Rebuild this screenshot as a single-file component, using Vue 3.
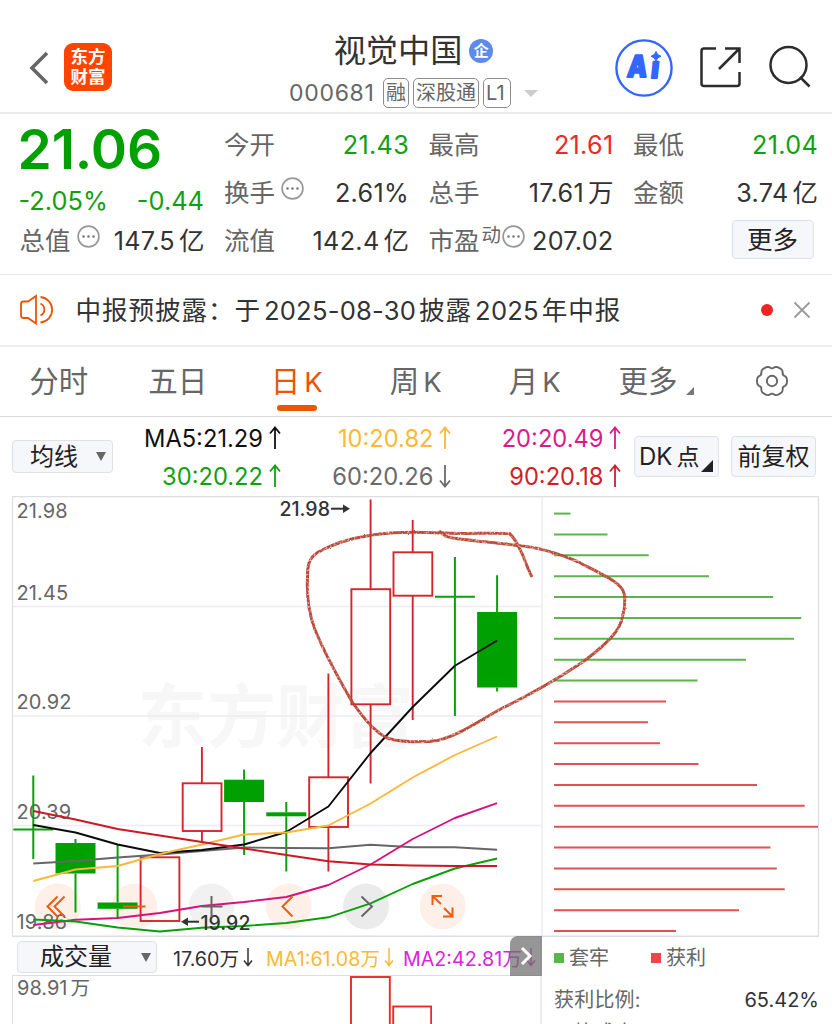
<template>
  <div class="page">
    <header class="top">
      <div class="top-left">
        <svg class="back" width="22" height="36" viewBox="0 0 22 36"><path d="M19 3 L4 18 L19 33" /></svg>
        <div class="logo"><span>东方</span><span>财富</span></div>
      </div>
      <div class="top-title">
        <div class="name">视觉中国<i class="badge">企</i></div>
        <div class="code">
          <span class="num">000681</span>
          <span class="tag">融</span><span class="tag">深股通</span><span class="tag l1">L1</span>
          <i class="caret"></i>
        </div>
      </div>
      <div class="top-right">
        <svg width="60" height="60" viewBox="0 0 60 60">
          <circle cx="30" cy="30" r="27.6" fill="none" stroke="#3366ff" stroke-width="2.4" />
          <text class="ai" x="16.500" y="39" transform="skewX(-6)" textLength="20" lengthAdjust="spacingAndGlyphs">A</text>
          <text class="ai" x="40.500" y="40.500" transform="skewX(-6)" textLength="8" lengthAdjust="spacingAndGlyphs">ı</text>
          <path d="M42 13.500 Q43 17.300 47 18.300 Q43 19.300 42 23 Q41 19.300 37 18.300 Q41 17.300 42 13.500Z" fill="#3366ff" stroke="#3366ff" />
        </svg>
        <svg width="44" height="44" viewBox="0 0 44 44" class="line-icon share">
          <path d="M17 3.500H5Q2.500 3.500 2.500 6V38.500Q2.500 41 5 41H38Q40.500 41 40.500 38.500V27" />
          <path d="M26 3.500H40.500V18M40 4L20 24" />
        </svg>
        <svg width="46" height="44" viewBox="0 0 46 44" class="line-icon">
          <circle cx="20.500" cy="20" r="18" /><path d="M32 32L41.500 41.500" />
        </svg>
      </div>
    </header>

    <section class="quote">
      <div class="col first">
        <div class="price">21.06</div>
        <div class="cell chg green"><span>-2.05%</span><span>-0.44</span></div>
        <div class="cell">
          <label>总值<svg class="dots" width="23" height="23" viewBox="0 0 23 23"><circle cx="11.500" cy="11.500" r="10.400" /><path d="M6.500 11.500h.01M11.500 11.500h.01M16.500 11.500h.01" /></svg></label>
          <b>147.5<em>亿</em></b>
        </div>
      </div>
      <div class="col" v-for="(col, n) in quotes" :key="n">
        <div class="cell" v-for="q in col" :key="q.label">
          <label>
            {{ q.label }}<sup v-if="q.sup">{{ q.sup }}</sup>
            <svg v-if="q.tip" class="dots" width="23" height="23" viewBox="0 0 23 23"><circle cx="11.500" cy="11.500" r="10.400" /><path d="M6.500 11.500h.01M11.500 11.500h.01M16.500 11.500h.01" /></svg>
          </label>
          <b :class="q.color">{{ q.value }}<em v-if="q.unit">{{ q.unit }}</em></b>
        </div>
        <div v-if="n === 2" class="cell more-cell"><button class="btn more">更多</button></div>
      </div>
    </section>

    <section class="news">
      <svg width="36" height="32" viewBox="0 0 36 32" class="speaker">
        <path d="M17 2V29.500L9 24H4.500Q2 24 2 21.500V10Q2 7.500 4.500 7.500H9L17 2Z" />
        <path d="M21.500 9.500A6.600 6.600 0 0 1 21.500 21.500M21.500 3A12.800 12.800 0 0 1 21.500 28.500" />
      </svg>
      <p>中报预披露：<span>于</span><span class="d">2025-08-30</span>披露<span class="d">2025</span>年中报</p>
      <i class="red-dot"></i>
      <svg width="18" height="18" viewBox="0 0 18 18" class="close"><path d="M1.500 1.500L16.500 16.500M16.500 1.500L1.500 16.500" /></svg>
    </section>

    <nav class="tabs">
      <div v-for="t in tabs" :key="t" :class="['tab', { active: t === '日K', wide: t === '更多' }]">
        <span>{{ t.replace('K', '') }}<span v-if="t.includes('K')" class="k">K</span></span>
        <svg v-if="t === '更多'" class="corner" width="8" height="8"><path d="M8 0V8H0Z" /></svg>
      </div>
      <div class="tab set">
        <svg width="34" height="32" viewBox="0 0 34 32" class="gear">
          <path :d="gearPath" />
          <circle cx="17" cy="16" r="5.200" />
        </svg>
      </div>
    </nav>

    <section class="ma-bar">
      <button class="btn select"><span>均线</span><i class="tri"></i></button>
      <div class="mas">
        <div v-for="m in mas" :key="m.text" :style="{ color: m.color }">
          {{ m.text }}<svg width="12" height="24" viewBox="0 0 12 24" :class="{ down: m.down }"><path d="M6 23V2M1 7.500L6 1.500L11 7.500" /></svg>
        </div>
      </div>
      <button class="btn dk">DK<span>点</span><svg width="12" height="12"><path d="M12 0V12H0Z" /></svg></button>
      <button class="btn fq">前复权</button>
    </section>

    <svg class="chart" width="832" height="441" viewBox="0 496 832 441">
      <defs>
        <filter id="crayon" x="-5%" y="-5%" width="110%" height="110%">
          <feTurbulence type="fractalNoise" baseFrequency="0.5" numOctaves="2" seed="4" result="n" />
          <feDisplacementMap in="SourceGraphic" in2="n" scale="2" result="rough" />
          <feColorMatrix in="n" type="matrix" values="0 0 0 0 0  0 0 0 0 0  0 0 0 0 0  0 0 -2 0 1.9" result="grain" />
          <feComposite in="rough" in2="grain" operator="in" />
        </filter>
      </defs>
      <text class="watermark" x="138" y="742">东方财富</text>
      <!-- grid -->
      <g class="grid">
        <path d="M12 606.500H542M12 716H542M12 825.500H542" />
        <path d="M542 497V937" stroke-width="2.500" />
      </g>
      <path class="frame" d="M12 496.300H819M12 936.300H819" />
      <path class="frame thin" d="M12.500 496V937M818.500 496V937" />

      <circle v-for="c in circles" :key="c.x" :cx="c.x" cy="906.500" r="23" :fill="c.fill" />
      <text v-for="a in axis" :key="a.v" class="axis" x="16.500" :y="a.y">{{ a.v }}</text>

      <!-- candles -->
      <g v-for="(c, i) in candles" :key="i" :class="c.up ? 'up' : 'dn'">
        <path :d="`M${cx(i)} ${c.h}V${c.t}M${cx(i)} ${c.b}V${c.l}`" />
        <rect v-if="c.up" :x="cx(i) - 19.2" :y="c.t" width="38.800" :height="c.b - c.t" />
        <path v-else-if="c.t === c.b" :d="`M${cx(i) - 20} ${c.t}h40`" />
        <rect v-else class="solid" :x="cx(i) - 20" :y="c.t" width="40" :height="c.b - c.t" />
      </g>

      <!-- moving averages -->
      <polyline v-for="l in lines" :key="l.color" class="ma" :stroke="l.color" :points="points(l.ys)" />

      <!-- chip distribution -->
      <path v-for="(x, i) in chips" :key="'c' + i" :d="`M554 ${513.6 + i * 20.87}H${x}`" :stroke="i < 9 ? '#5ab54b' : '#e05055'" stroke-width="2" />

      <text class="note" x="279.500" y="516">21.98</text>
      <path class="note-arrow" d="M331 508.700H347" /><path class="note-head" d="M343 504.500L350 508.700L343 513Z" />
      <text class="note" x="200.500" y="929.500">19.92</text>
      <path class="note-arrow" d="M184 921.700H199" /><path class="note-head" d="M188 917.500L181 921.700L188 926Z" />

      <!-- floating controls -->
      <g class="ctl">
        <path d="M57.500 896.500L47.500 906.500L57.500 916.500M64.500 896.500L54.500 906.500L64.500 916.500" />
        <path d="M123 906.500H145.500" />
        <path class="g" d="M201.500 906.500H222.500M211.500 896V917" />
        <path d="M292.500 896.500L282.500 906.500L292.500 916.500" />
        <path class="g" d="M361.500 896.500L372 906.500L361.500 916.500" />
        <path d="M441 904L432.500 896M432.500 905V896H442M444 908L452.500 916.500M452.500 907.500V916.500H443" />
      </g>

      <g class="ring">
        <path d="M439.500 533C414.500 531.500 387.500 532.500 369.500 535.500C349.500 538.500 329.500 545.500 317.500 552.500C308.500 558.500 307.500 565.500 307.500 577.500C306.500 597.500 309.500 614.500 314.500 628.500C325.500 655.500 338.500 678.500 352.500 702.500C362.500 716.500 374.500 732.500 388.500 738.500C402.500 742.500 424.500 742.500 437.500 740.500C461.500 734.500 482.500 718.500 503.500 707.500C528.500 695.500 559.500 677.500 583.500 661.500C604.500 645.500 620.500 631.500 622.500 616.500C625.500 605.500 625.500 594.500 622.500 589.500C616.500 580.500 600.500 573.500 577.500 561.500C553.500 551.500 532.500 546.500 517.500 545.500C495.500 542.500 465.500 540.500 450.500 537.500C444.500 536.500 441.500 534.500 439.500 530.500" />
        <path d="M439.500 532.500C460.500 534.500 480.500 532.500 509.500 533.500C515.500 538.500 518.500 546.500 522.500 554.500C525.500 562.500 528.500 570.500 532 577" />
      </g>
    </svg>

    <section class="bottom">
      <div class="left">
        <div class="ind">
          <button class="btn select vol"><span>成交量</span><i class="tri"></i></button>
          <span v-for="v in vols" :key="v.text" :class="['vol-text', v.cls]">{{ v.text }}<svg width="10" height="20" viewBox="0 0 10 20"><path d="M5 1V18M1 13.500L5 18.500L9 13.500" /></svg></span>
          <div class="next"><svg width="14" height="20" viewBox="0 0 14 20"><path d="M3 2L11 10L3 18" /></svg></div>
        </div>
        <div class="vol-panel">
          <span>98.91<em>万</em></span>
          <svg width="82" height="60" class="vol-bars"><rect x="1" y="1" width="38.800" height="80" /><rect x="43.200" y="30.500" width="38" height="50" /></svg>
        </div>
      </div>
      <div class="right">
        <div class="legend"><i class="sq g"></i><span>套牢</span><i class="sq r"></i><span>获利</span></div>
        <div class="stat"><span>获利比例:</span><b>65.42%</b></div>
        <div class="stat avg"><span>平均成本:</span><b>20.28</b></div>
      </div>
    </section>
  </div>
</template>

<script setup>
const quotes = [
  [
    { label: '今开', value: '21.43', color: 'green' },
    { label: '换手', value: '2.61%', tip: true },
    { label: '流值', value: '142.4', unit: '亿' },
  ],
  [
    { label: '最高', value: '21.61', color: 'red' },
    { label: '总手', value: '17.61', unit: '万' },
    { label: '市盈', sup: '动', value: '207.02', tip: true },
  ],
  [
    { label: '最低', value: '21.04', color: 'green' },
    { label: '金额', value: '3.74', unit: '亿' },
  ],
]
const tabs = ['分时', '五日', '日K', '周K', '月K', '更多']
const mas = [
  { text: 'MA5:21.29', color: '#111' },
  { text: '10:20.82', color: '#fbb936' },
  { text: '20:20.49', color: '#d81b8c' },
  { text: '30:20.22', color: '#12a012' },
  { text: '60:20.26', color: '#6a6a6a', down: true },
  { text: '90:20.18', color: '#cf1f2a' },
]
const axis = [
  { v: '21.98', y: 518 },
  { v: '21.45', y: 599.5 },
  { v: '20.92', y: 709 },
  { v: '20.39', y: 818.5 },
  { v: '19.86', y: 929 },
]
const circles = [
  { x: 57.7, fill: '#fef0e9' },
  { x: 134.5, fill: '#fef0e9' },
  { x: 211.5, fill: '#f1f1f1' },
  { x: 288.7, fill: '#fef0e9' },
  { x: 366, fill: '#ebebeb' },
  { x: 442.7, fill: '#fef0e9' },
]
// h / l = wick ends, t / b = body edges, all in chart pixels
const candles = [
  { h: 775.5, t: 829.5, b: 829.5, l: 859 },
  { h: 839, t: 843, b: 873.5, l: 912.5 },
  { h: 844, t: 902.5, b: 908.8, l: 918 },
  { h: 857.3, t: 857.3, b: 921, l: 921, up: true },
  { h: 747, t: 783.3, b: 831, l: 842, up: true },
  { h: 769.5, t: 779.7, b: 802, l: 855 },
  { h: 802, t: 812.3, b: 816.3, l: 871.5 },
  { h: 673.5, t: 777.3, b: 827, l: 871.5, up: true },
  { h: 499.5, t: 589.2, b: 704.3, l: 783.5, up: true },
  { h: 520, t: 552.3, b: 595.7, l: 720, up: true },
  { h: 557, t: 596.7, b: 596.7, l: 716 },
  { h: 575.3, t: 612, b: 687.5, l: 691.5 },
]
const lines = [
  { color: '#666666', ys: [863.5, 861, 857.5, 854.5, 851, 847.5, 848, 848.3, 844.8, 847.3, 847.3, 849.8] },
  { color: '#0b0b0b', ys: [825, 832.5, 844.5, 853, 850, 844.5, 832, 806.5, 753, 707, 665.7, 640.5] },
  { color: '#fbb73a', ys: [881, 869.5, 866, 854, 844.5, 834.5, 832.5, 825.5, 803.5, 777.5, 755, 736.5] },
  { color: '#d6127f', ys: [925, 919.7, 918, 913, 906, 902, 897, 885, 864.5, 839, 818, 803.2] },
  { color: '#08a008', ys: [919.5, 921.5, 927.5, 931.5, 927.7, 926, 923, 917.3, 903.3, 884, 868.5, 858.5] },
  { color: '#cc1825', ys: [811, 819.5, 829, 835.5, 842, 848.5, 855, 861.3, 864.5, 865.5, 866, 866] },
]
const chips = [
  570.5, 607.5, 648.7, 709, 773.2, 801.2, 794, 746, 697.5,
  666, 648, 660, 698.5, 757, 804.7, 818, 770.5, 776.8, 784.7, 739, 676,
]
const vols = [
  { text: '17.60万', cls: 'v0' },
  { text: 'MA1:61.08万', cls: 'v1' },
  { text: 'MA2:42.81万', cls: 'v2' },
]

const cx = (i) => +(33.3 + i * 42.16).toFixed(1)
const points = (ys) => ys.map((y, i) => `${cx(i)},${y}`).join(' ')

// six-lobed gear outline
const gearPath = (() => {
  let d = ''
  for (let a = 0; a < 360; a += 4) {
    const t = (a * Math.PI) / 180
    const r = 14.2 + 1.1 * Math.cos(6 * t) - 0.4 * Math.cos(12 * t)
    d += `${a ? 'L' : 'M'}${(17 + r * Math.cos(t)).toFixed(2)} ${(16 + r * Math.sin(t)).toFixed(2)}`
  }
  return d + 'Z'
})()
</script>

<style>
body { margin: 0; background: #fff; }
</style>

<style scoped>
.page { width: 832px; height: 1024px; overflow: hidden; background: #fff; color: #333; font-family: Inter, "Noto Sans CJK SC", sans-serif; }
.page * { box-sizing: border-box; }
i, em { font-style: normal; }
b { font-weight: 400; }
svg { display: block; }
.green { color: #12a012; }
.red { color: #f02828; }
.btn { font: inherit; color: #222; background: #f6f7fb; border: 1.5px solid #e0e1e7; border-radius: 4px; padding: 0; line-height: 1; white-space: nowrap; }

.top { height: 114px; border-bottom: 2px solid #ececec; display: grid; grid-template-columns: 289px 249px 1fr; }
.top-left { display: flex; padding: 43px 0 0 28px; }
.back { margin: 7px 14px 0 0; fill: none; stroke: #666; stroke-width: 3.6; }
.logo { width: 48px; height: 48px; border-radius: 9px; background: #ff4400; color: #fff; font-weight: 700; font-size: 17.500px; line-height: 20px; display: flex; flex-direction: column; align-items: center; justify-content: center; }
.top-title { display: flex; flex-direction: column; align-items: center; padding-top: 31px; }
.name { display: flex; align-items: center; font-size: 32.200px; line-height: 40px; height: 40px; }
.badge { width: 24px; height: 24px; border-radius: 50%; background: #5b8cec; color: #fff; font-size: 15px; font-weight: 700; line-height: 23px; text-align: center; margin-left: 7px; }
.code { display: flex; align-items: center; height: 30px; margin-top: 7px; width: 249px; color: #666; }
.num { font-size: 23px; letter-spacing: 0.7px; width: 94px; }
.tag { border: 1.5px solid #8c8c8c; border-radius: 5px; height: 30px; line-height: 29px; font-size: 20px; padding: 0 2px; margin-right: 4px; white-space: nowrap; }
.l1 { width: 28px; }
.caret { border: 7px solid transparent; border-top: 7px solid #ccc; border-bottom: 0; margin-left: 9px; }
.top-right { display: flex; align-items: flex-start; padding: 38px 0 0 76px; }
.ai { font-family: Inter, sans-serif; font-weight: 900; font-size: 30px; fill: #3366ff; stroke: #3366ff; stroke-width: 1.8; stroke-linejoin: round; }
.line-icon { fill: none; stroke: #2c2c2c; stroke-width: 2.5; margin-top: 7px; }
.share { margin: 7px 25px 0 25px; }

.quote { height: 161px; border-bottom: 1px solid #e6e6e6; padding: 7px 14px 0 19.500px; display: grid; grid-template-columns: repeat(4, 184.500px); column-gap: 20px; }
.cell { height: 48px; display: flex; justify-content: space-between; align-items: center; font-size: 25.200px; white-space: nowrap; }
.cell label { display: flex; align-items: center; color: #666; font-size: 25.500px; height: 30px; line-height: 30px; margin-top: -1px; }
.cell b { line-height: 30px; height: 30px; letter-spacing: 0.3px; margin-right: -0.5px; }
.cell em { font-size: 25.500px; margin-left: 4px; line-height: 20px; letter-spacing: 0; }
.price { font-size: 55px; font-weight: 600; color: #00a000; height: 55px; line-height: 56px; letter-spacing: -0.1px; margin-left: -2px; }
.chg { padding-top: 1px; margin-bottom: -7px; margin-left: -1px; font-size: 25.400px; }
sup { font-size: 19.500px; line-height: 20px; position: relative; top: -6px; margin-left: 2px; vertical-align: baseline; }
.dots { margin: -9px 0 0 6px; fill: none; stroke: #999; stroke-width: 1.7; }
.dots path { stroke: #777; stroke-width: 2.6; stroke-linecap: round; }
sup + .dots { margin-left: 1px; }
.more-cell { justify-content: flex-end; padding-right: 4px; }
.more { width: 82px; height: 39px; font-size: 25.500px; margin-top: -4px; padding-top: 1px; }

.news { height: 72px; border-bottom: 2px solid #ececec; display: flex; align-items: center; padding: 0 21px 0 19px; }
.speaker { fill: none; stroke: #ea5504; stroke-width: 1.8; }
.news p { margin: -4px auto 0 20.500px; font-size: 25.600px; letter-spacing: 0.9px; white-space: nowrap; }
.news .d { margin: 0 3px; letter-spacing: 0.2px; }
.red-dot { width: 12px; height: 12px; border-radius: 50%; background: #f52222; margin-right: 20px; }
.close { stroke: #999; stroke-width: 1.8; }

.tabs { height: 70px; border-bottom: 1.5px solid #d9d9de; display: grid; grid-template-columns: repeat(7, 119px); }
.tab { position: relative; display: flex; align-items: center; justify-content: center; font-size: 29.500px; color: #666; height: 68px; padding: 0 1.500px 4px 0; }
.set { padding: 0; }
.k { margin-left: 4px; font-size: 27.500px; }
.active { color: #ea5504; }
.active::after { content: ""; position: absolute; left: 39px; bottom: 4px; width: 40px; height: 6px; border-radius: 3px; background: #ea5504; }
.wide { padding-right: 13px; }
.corner { align-self: flex-end; margin: 0 -16px 16px 8px; fill: #777; }
.gear { fill: none; stroke: #666; stroke-width: 1.9; margin-left: -4px; }

.ma-bar { height: 79px; display: flex; align-items: center; padding-left: 12px; }
.select { width: 101px; height: 33px; font-size: 24px; display: flex; align-items: center; justify-content: space-between; padding: 0 6px 0 17px; }
.tri { border: 5px solid transparent; border-top: 9px solid #666; border-bottom: 0; }
.mas { display: grid; grid-template-columns: 167.500px 170.500px 170px; row-gap: 0; width: 508px; margin-right: 13px; padding-top: 1px; }
.mas div { height: 38px; display: flex; align-items: center; justify-content: flex-end; font-size: 23.700px; gap: 5.500px; }
.mas svg { fill: none; stroke: currentColor; stroke-width: 1.8; }
.down { transform: rotate(180deg); }
.dk { position: relative; width: 85px; height: 41px; font-size: 24px; text-align: left; padding-left: 4px; margin-right: 12px; }
.dk span { margin-left: 4px; font-size: 23px; }
.dk svg { position: absolute; right: 5px; bottom: 4px; fill: #222; }
.fq { width: 85px; height: 41px; font-size: 24px; }

.watermark { font-size: 69px; font-weight: 700; fill: #f7f7f8; }
.grid path { stroke: #ececf2; stroke-width: 1.5; }
.frame { stroke: #dddde4; stroke-width: 1.8; }
.frame.thin { stroke-width: 1.2; }
.axis { font-size: 20px; fill: #666; letter-spacing: 0.1px; }
.up path, .up rect { fill: none; stroke: #d4252f; stroke-width: 1.9; }
.dn path { stroke: #0aa00a; stroke-width: 2; }
.dn .solid { fill: #00a000; }
.ma { fill: none; stroke-width: 1.9; stroke-linejoin: round; }
.note { font-size: 19.500px; font-weight: 500; fill: #333; }
.note-arrow { stroke: #333; stroke-width: 2; }
.note-head { fill: #333; }
.ctl path { fill: none; stroke: #ee5c10; stroke-width: 2; }
.ctl .g { stroke: #666; }
.ring { fill: none; stroke: #b94636; stroke-width: 3; filter: url(#crayon); }

.bottom { display: grid; grid-template-columns: 530px 277px; padding-left: 12px; height: 87px; }
.left { border-right: 2px solid #ececf2; }
.ind { position: relative; height: 38px; padding: 2px 0 0 5px; display: flex; align-items: center; font-size: 19.700px; }
.vol { width: 140px; height: 32px; padding: 0 5px 0 22px; margin-right: 16px; }
.vol-text { display: flex; align-items: center; gap: 4px; white-space: nowrap; }
.vol-text svg { fill: none; stroke: currentColor; stroke-width: 1.5; }
.v0 { width: 93px; }
.v1 { width: 137px; color: #fbb936; }
.v2 { color: #dd22dd; }
.next { position: absolute; right: -2px; top: -1px; width: 32px; height: 40px; border-radius: 8px 0 0 0; background: rgba(110, 110, 110, 0.72); display: flex; align-items: center; justify-content: center; }
.next path { fill: none; stroke: #fff; stroke-width: 3; }
.vol-panel { border-top: 1.500px solid #dddde4; border-left: 1px solid #dddde4; height: 50px; display: flex; font-size: 20px; color: #666; padding-left: 4px; }
.vol-panel span { width: 333px; line-height: 25px; white-space: nowrap; }
.vol-panel em { font-size: 19.500px; margin-left: 3px; }
.vol-bars { fill: none; stroke: #ee2828; stroke-width: 1.9; }
.right { padding-left: 12px; color: #666; font-size: 20px; }
.legend { height: 42px; display: flex; align-items: center; }
.legend span { margin-top: -3px; }
.sq { width: 10px; height: 10px; margin-right: 5px; }
.sq.g { background: #58b847; }
.sq.r { background: #ea4848; margin-left: 42px; }
.stat { height: 34px; padding-top: 7px; display: flex; justify-content: space-between; align-items: center; white-space: nowrap; }
.stat span { margin-top: -2px; letter-spacing: 0.2px; }
.stat b { color: #333; }
.avg { height: 31px; padding-top: 7px; }
.avg b { padding-top: 3px; }
</style>
